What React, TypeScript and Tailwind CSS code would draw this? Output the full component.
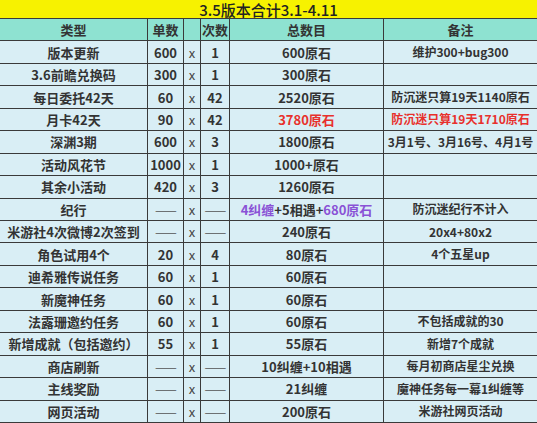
import type { ReactNode } from "react";

type Row = {
  name: string;
  unit: string;
  times: string;
  total: ReactNode;
  note: ReactNode;
  red?: boolean;
};

const DASH = "——";

const rows: Row[] = [
  { name: "版本更新", unit: "600", times: "1", total: "600原石", note: "维护300+bug300" },
  { name: "3.6前瞻兑换码", unit: "300", times: "1", total: "300原石", note: "" },
  { name: "每日委托42天", unit: "60", times: "42", total: "2520原石", note: "防沉迷只算19天1140原石" },
  { name: "月卡42天", unit: "90", times: "42", total: "3780原石", note: "防沉迷只算19天1710原石", red: true },
  { name: "深渊3期", unit: "600", times: "3", total: "1800原石", note: "3月1号、3月16号、4月1号" },
  { name: "活动风花节", unit: "1000", times: "1", total: "1000+原石", note: "" },
  { name: "其余小活动", unit: "420", times: "3", total: "1260原石", note: "" },
  {
    name: "纪行",
    unit: DASH,
    times: DASH,
    total: (
      <>
        <span className="text-[#8a52d6]">4纠缠</span>+5相遇+<span className="text-[#8a52d6]">680原石</span>
      </>
    ),
    note: "防沉迷纪行不计入",
  },
  { name: "米游社4次微博2次签到", unit: DASH, times: DASH, total: "240原石", note: "20x4+80x2" },
  { name: "角色试用4个", unit: "20", times: "4", total: "80原石", note: "4个五星up" },
  { name: "迪希雅传说任务", unit: "60", times: "1", total: "60原石", note: "" },
  { name: "新魔神任务", unit: "60", times: "1", total: "60原石", note: "" },
  { name: "法露珊邀约任务", unit: "60", times: "1", total: "60原石", note: "不包括成就的30" },
  { name: "新增成就（包括邀约）", unit: "55", times: "1", total: "55原石", note: "新增7个成就" },
  { name: "商店刷新", unit: DASH, times: DASH, total: "10纠缠+10相遇", note: "每月初商店星尘兑换" },
  { name: "主线奖励", unit: DASH, times: DASH, total: "21纠缠", note: "魔神任务每一幕1纠缠等" },
  { name: "网页活动", unit: DASH, times: DASH, total: "200原石", note: "米游社网页活动" },
];

function Cell({ children, last = false, className = "" }: { children?: ReactNode; last?: boolean; className?: string }) {
  return (
    <div
      className={`flex items-center justify-center overflow-hidden whitespace-nowrap border-b border-[#3a3a3a] ${
        last ? "" : "border-r"
      } ${className}`}
    >
      {children}
    </div>
  );
}

function Value({ v }: { v: string }) {
  if (v === DASH) return <span className="font-normal tracking-[-1px] text-[#555]">{v}</span>;
  return <>{v}</>;
}

export default function App() {
  return (
    <div
      className="h-[423px] w-[537px] overflow-hidden bg-[#d9eef5] text-[13px] font-bold text-[#333]"
      style={{ fontFamily: '"Noto Sans CJK SC", "Noto Sans", sans-serif' }}
    >
      <div className="flex h-[19px] items-center justify-center border-b border-[#3a3a3a] bg-[#f7f200] text-[15px] font-medium leading-none text-[#222]">
        3.5版本合计3.1-4.11
      </div>
      <div className="grid h-[404px] grid-cols-[148px_36px_17px_29px_154px_1fr] grid-rows-[repeat(18,minmax(0,1fr))] leading-none">
        <Cell className="bg-[#8ee2d1]">类型</Cell>
        <Cell className="bg-[#8ee2d1]">单数</Cell>
        <Cell className="bg-[#8ee2d1]" />
        <Cell className="bg-[#8ee2d1]">次数</Cell>
        <Cell className="bg-[#8ee2d1]">总数目</Cell>
        <Cell className="bg-[#8ee2d1]" last>
          备注
        </Cell>
        {rows.map((r) => (
          <div key={r.name} className="contents">
            <Cell>{r.name}</Cell>
            <Cell>
              <Value v={r.unit} />
            </Cell>
            <Cell className="font-normal text-[#444]">x</Cell>
            <Cell>
              <Value v={r.times} />
            </Cell>
            <Cell className={r.red ? "text-[#e8302c]" : ""}>{r.total}</Cell>
            <Cell last className={`text-[12px] ${r.red ? "text-[#e8302c]" : ""}`}>
              {r.note}
            </Cell>
          </div>
        ))}
      </div>
    </div>
  );
}
